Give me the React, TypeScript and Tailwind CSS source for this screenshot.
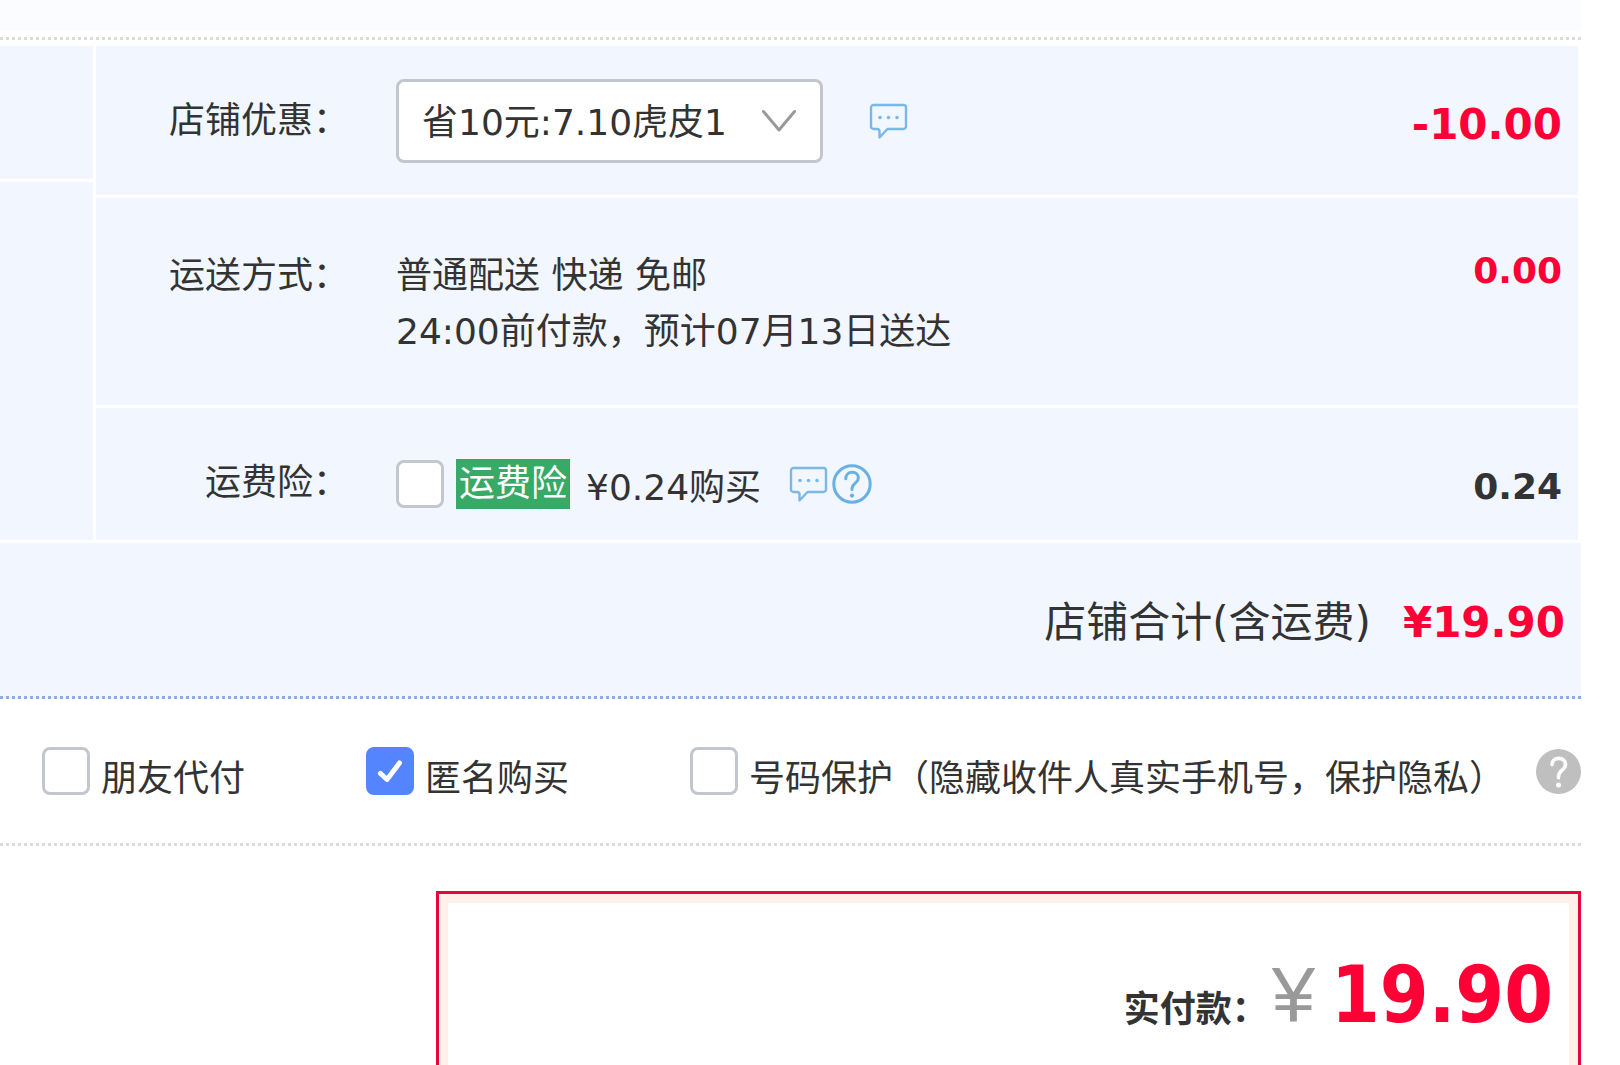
import { useState, type ReactNode } from 'react';

function ChatIcon() {
  return (
    <svg className="block h-[36px] w-[39px]" viewBox="0 0 39 36" fill="none" stroke="#79b9e8" strokeWidth="2.4" strokeLinejoin="round">
      <path d="M4.5 2h30a2.5 2.5 0 0 1 2.5 2.5v19a2.5 2.5 0 0 1-2.5 2.5H18.5L10.5 34.5V28.5Q10.5 26 8 26H4.5A2.5 2.5 0 0 1 2 23.5v-19A2.5 2.5 0 0 1 4.5 2z" />
      <g fill="#79b9e8" stroke="none">
        <circle cx="11" cy="14.5" r="1.8" />
        <circle cx="19.5" cy="14.5" r="1.8" />
        <circle cx="28" cy="14.5" r="1.8" />
      </g>
    </svg>
  );
}

function HelpOutlineIcon() {
  return (
    <svg className="block size-[40px]" viewBox="0 0 40 40" fill="none" stroke="#69b1e4" strokeWidth="3" strokeLinecap="round">
      <circle cx="20" cy="20" r="18.2" />
      <path d="M13.8 14.8c0-4 2.6-6.6 6.4-6.6s6.2 2.5 6.2 5.8c0 5-6.4 5.4-6.4 10.6v1" />
      <circle cx="20" cy="31.6" r="2.1" fill="#69b1e4" stroke="none" />
    </svg>
  );
}

function HelpSolidIcon() {
  return (
    <svg className="block size-[45px]" viewBox="0 0 45 45" fill="none">
      <circle cx="22.5" cy="22.5" r="22.5" fill="#bfbfbf" />
      <path d="M16 15.6c0-3.8 2.8-6.2 6.8-6.2s6.7 2.6 6.7 6.1c0 5.6-7 5.8-7 12v1.2" stroke="#fff" strokeWidth="3.6" strokeLinecap="round" />
      <circle cx="22.5" cy="36" r="2.5" fill="#fff" />
    </svg>
  );
}

interface CheckBoxProps {
  id: string;
  defaultChecked?: boolean;
}

function CheckBox({ id, defaultChecked = false }: CheckBoxProps) {
  const [checked, setChecked] = useState(defaultChecked);

  return (
    <span className="relative block size-12 shrink-0">
      <input
        id={id}
        type="checkbox"
        checked={checked}
        onChange={(e) => setChecked(e.target.checked)}
        className="block size-12 appearance-none rounded-lg border-[3px] border-[#c4c6cf] bg-white checked:border-[#5584ff] checked:bg-[#5584ff]"
      />
      {checked && (
        <svg className="pointer-events-none absolute inset-0 size-12" viewBox="0 0 48 48" fill="none">
          <path d="M14.5 26.5l6.5 6L33.5 16" stroke="#fff" strokeWidth="5" strokeLinecap="round" strokeLinejoin="round" />
        </svg>
      )}
    </span>
  );
}

interface RowProps {
  label: ReactNode;
  price: ReactNode;
  className: string;
  children: ReactNode;
}

// 订单明细的一行：标签 / 内容 / 金额
function Row({ label, price, className, children }: RowProps) {
  return (
    <div className={`flex bg-[#f1f6ff] pr-4 ${className}`}>
      <div className="w-[253px] shrink-0 text-right">{label}</div>
      <div className="ml-[47px] flex-1">{children}</div>
      <div className="font-bold">{price}</div>
    </div>
  );
}

export default function App() {
  return (
    <main className="flex min-h-screen flex-col bg-white pr-[39px] font-['DejaVu_Sans','Noto_Sans_CJK_SC',sans-serif] text-4xl leading-[56px] text-[#333]">
      <div className="h-[31px] bg-[#fbfcff]"></div>
      <div className="mt-1.5 h-[3px] bg-[repeating-linear-gradient(90deg,#dcdcdc_0_3px,transparent_3px_6px)]"></div>

      {/* 店铺订单明细 */}
      <section className="mt-1.5 mr-[3px] flex gap-[3px]">
        <div className="flex w-[93px] shrink-0 flex-col gap-[3px]">
          <div className="h-[133px] bg-[#f1f6ff]"></div>
          <div className="flex-1 bg-[#f1f6ff]"></div>
        </div>

        <div className="flex flex-1 flex-col gap-[3px]">
          <Row
            className="items-center pt-[33px] pb-8"
            label={<label htmlFor="discount">店铺优惠：</label>}
            price={<span className="block pt-2 text-[42px] text-[#ff0036]">-10.00</span>}
          >
            <div className="flex items-center gap-[46px]">
              <div className="relative">
                <select
                  id="discount"
                  className="block h-[84px] w-[427px] appearance-none rounded-lg border-[3px] border-[#c4c6cf] bg-white pt-1 pl-[23px]"
                >
                  <option>省10元:7.10虎皮1</option>
                </select>
                <svg className="pointer-events-none absolute top-[30px] right-[26px] h-6 w-[36px]" viewBox="0 0 36 24" fill="none">
                  <path d="M2.5 2.5L18 21 33.5 2.5" stroke="#999" strokeWidth="3" strokeLinecap="round" strokeLinejoin="round" />
                </svg>
              </div>
              <button type="button" aria-label="优惠说明">
                <ChatIcon />
              </button>
            </div>
          </Row>

          <Row
            className="pt-[50px] pb-[45px]"
            label="运送方式："
            price={<span className="block leading-[46px] text-[#ff0036]">0.00</span>}
          >
            <p>普通配送 快递 免邮</p>
            <p>24:00前付款，预计07月13日送达</p>
          </Row>

          <Row
            className="items-center pt-[42px] pb-6"
            label="运费险："
            price={<span className="block pt-2">0.24</span>}
          >
            <div className="flex items-center pt-0.5">
              <CheckBox id="insurance" />
              <label htmlFor="insurance" className="ml-3 flex items-center gap-4">
                <span className="bg-[#37aa67] px-[3px] leading-[50px] text-white">运费险</span>
                <span className="pt-2">¥0.24购买</span>
              </label>
              <button type="button" aria-label="运费险说明" className="ml-7">
                <ChatIcon />
              </button>
              <button type="button" aria-label="运费险帮助" className="ml-1">
                <HelpOutlineIcon />
              </button>
            </div>
          </Row>
        </div>
      </section>

      {/* 店铺合计 */}
      <div className="mt-[3px] flex items-center justify-end gap-8 bg-[#f1f6ff] pt-[52px] pb-[45px] pr-4 text-[42px]">
        <span>店铺合计(含运费)</span>
        <span className="font-bold text-[#ff0036]">¥19.90</span>
      </div>
      <div className="h-[3px] bg-[repeating-linear-gradient(90deg,#93a9ef_0_3px,#f1f6ff_3px_6px)]"></div>

      {/* 付款选项 */}
      <div className="flex items-center py-9 pl-[42px]">
        <div className="flex w-[324px] items-center gap-[11px]">
          <CheckBox id="friend" />
          <label htmlFor="friend" className="pt-4">朋友代付</label>
        </div>
        <div className="flex w-[324px] items-center gap-[11px]">
          <CheckBox id="anonymous" defaultChecked />
          <label htmlFor="anonymous" className="pt-4">匿名购买</label>
        </div>
        <div className="flex flex-1 items-center gap-[11px]">
          <CheckBox id="protect" />
          <label htmlFor="protect" className="pt-4 whitespace-nowrap">号码保护（隐藏收件人真实手机号，保护隐私）</label>
        </div>
        <button type="button" aria-label="号码保护说明">
          <HelpSolidIcon />
        </button>
      </div>
      <div className="h-[3px] bg-[repeating-linear-gradient(90deg,#dcdcdc_0_3px,transparent_3px_6px)]"></div>

      {/* 实付款 */}
      <section className="mt-[45px] ml-[436px] flex flex-1 border-[3px] border-b-0 border-[#e3073c]">
        <div className="flex flex-1 items-baseline justify-end border-[9px] border-b-0 border-[#fff0ea] pt-[47px] pr-4">
          <span className="font-bold">实付款：</span>
          <span className="ml-1 font-['Liberation_Sans',sans-serif] text-[78px] leading-[90px] text-[#999]">¥</span>
          <span className="ml-4 font-['DejaVu_Sans_Condensed','DejaVu_Sans',sans-serif] text-[78px] leading-[90px] font-bold text-[#ff0036]">
            19.90
          </span>
        </div>
      </section>
    </main>
  );
}
